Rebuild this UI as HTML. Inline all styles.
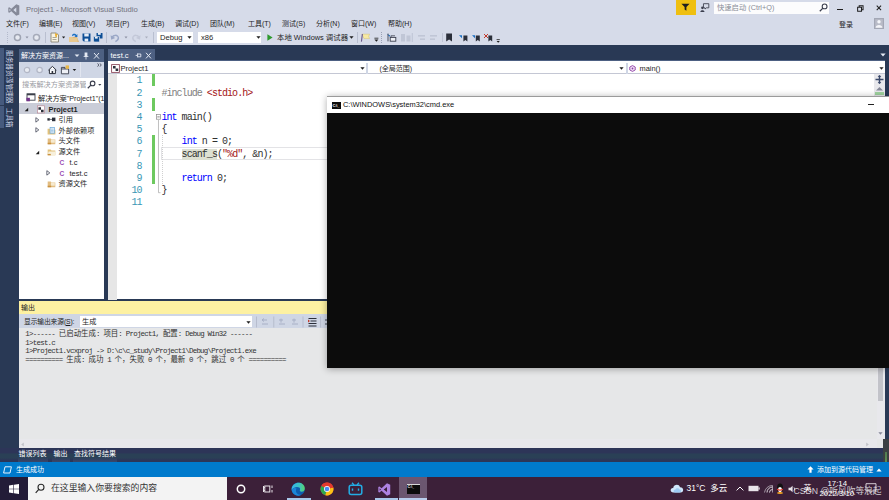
<!DOCTYPE html>
<html lang="zh-CN">
<head>
<meta charset="utf-8">
<title>Project1 - Microsoft Visual Studio</title>
<style>
html,body{margin:0;padding:0;}
body{width:889px;height:500px;overflow:hidden;position:relative;background:#d6dbe9;
  font-family:"Liberation Sans","Noto Sans CJK SC",sans-serif;font-size:7px;color:#1e1e1e;line-height:1;}
.a{position:absolute;white-space:nowrap;}
.t{position:absolute;white-space:nowrap;line-height:10px;height:10px;}
.mono{font-family:"Liberation Mono","Noto Sans CJK SC",monospace;}
svg{position:absolute;overflow:visible;}
/* ---------- title / menu / toolbar ---------- */
#title{left:26px;top:4.9px;font-size:7.7px;letter-spacing:-0.04px;color:#72727d;}
.menu{top:19.2px;font-size:7px;color:#1e1e1e;}
.combo{background:#fff;height:11px;top:32px;}
/* ---------- dark frame ---------- */
#frame{left:0;top:45px;width:889px;height:418px;background:#293955;}
.ptab{background:#4d6082;color:#fff;}
/* ---------- code ---------- */
.ln{position:absolute;left:118.5px;width:23px;text-align:right;color:#3a97b5;font-size:10px;letter-spacing:-0.95px;height:12px;line-height:12px;}
.cl{position:absolute;left:161.4px;font-size:10px;letter-spacing:-0.95px;height:12px;line-height:12px;white-space:pre;color:#303030;}
.hl{background:#dde0d2}.kw{color:#0000ff}.str{color:#a31515}.pp{color:#808080}
.gb{position:absolute;left:152.3px;width:2.8px;background:#6dc95f;margin-top:-0.3px}
/* ---------- output ---------- */
.ol .c{letter-spacing:0;font-size:7.44px}
.ol{position:absolute;left:25.3px;font-size:7.44px;letter-spacing:-0.744px;white-space:pre;color:#303030;height:9px;line-height:9px;}
</style>
</head>
<body>
<!-- title bar -->
<svg style="left:8px;top:4px" width="12" height="12" viewBox="0 0 12 12"><path d="M8.3 0.3 L11.3 1.6 V10.4 L8.3 11.7 L3.3 7.2 L1.3 8.8 L0.3 8.3 V3.7 L1.3 3.2 L3.3 4.8 Z M8.3 3.6 L5.3 6 L8.3 8.4 Z M1.5 4.8 V7.2 L2.8 6 Z" fill="#858998" fill-rule="evenodd"/></svg>
<div class="t" id="title">Project1 - Microsoft Visual Studio</div>


<!-- feedback / quick launch / window buttons -->
<div class="a" style="left:676px;top:0;width:20px;height:14.8px;background:#efbf10"></div>
<svg style="left:681.200px;top:3px" width="9" height="8.500" viewBox="0 0 11 10"><path d="M0.5 0.8 H10.5 L6.6 4.8 V9.2 L4.4 7.6 V4.8 Z" fill="#1e1e1e"/></svg>
<svg style="left:699.500px;top:2.800px" width="9.500" height="9.500" viewBox="0 0 11 11"><path d="M4 0.8 H10.2 V5.6 H7.4 L5.8 7 V5.6 H4 Z" fill="none" stroke="#3b3f4e" stroke-width="1"/><circle cx="2.8" cy="5.6" r="1.5" fill="#3b3f4e"/><path d="M0.4 10.4 C0.4 7.6 5.2 7.6 5.2 10.4 Z" fill="#3b3f4e"/></svg>
<div class="a" style="left:714px;top:2px;width:114.800px;height:11.800px;background:#fcfcfd"></div>
<div class="t" style="left:717px;top:3.4px;font-size:7.3px;color:#8a8d98">快速启动 (Ctrl+Q)</div>
<svg style="left:819px;top:3.4px" width="9" height="9" viewBox="0 0 9 9"><circle cx="5.6" cy="3.4" r="2.4" fill="none" stroke="#3b3f4e" stroke-width="1.1"/><path d="M3.9 5.1 L0.8 8.2" stroke="#3b3f4e" stroke-width="1.3"/></svg>
<div class="a" style="left:837.200px;top:8.600px;width:5.500px;height:1.700px;background:#1e1e1e"></div>
<svg style="left:856.500px;top:4.500px" width="7" height="7" viewBox="0 0 9 9"><path d="M0.8 3 H5.8 V8 H0.8 Z M2.8 3 V1 H7.8 V6 H5.8" fill="none" stroke="#1e1e1e" stroke-width="1.3"/></svg>
<svg style="left:876.400px;top:5.200px" width="5.800" height="5.800" viewBox="0 0 8 8"><path d="M1 1 L7 7 M7 1 L1 7" stroke="#1e1e1e" stroke-width="1.4"/></svg>
<div class="t" style="left:839px;top:19.7px;font-size:7px;color:#1e1e1e">登录</div>
<svg style="left:874px;top:18px" width="10" height="11" viewBox="0 0 10 11"><rect x="0.6" y="0.6" width="8.8" height="9.800" fill="#b9bcc8" stroke="#a3a7b5" stroke-width="1.200"/><circle cx="5" cy="3.700" r="1.700" fill="#f4f5f9"/><path d="M1.600 9.800 C1.600 6 8.400 6 8.400 9.800 Z" fill="#f4f5f9"/></svg>

<!-- menu -->
<div class="t menu" style="left:6px">文件(F)</div>
<div class="t menu" style="left:39px">编辑(E)</div>
<div class="t menu" style="left:72px">视图(V)</div>
<div class="t menu" style="left:106px">项目(P)</div>
<div class="t menu" style="left:141px">生成(B)</div>
<div class="t menu" style="left:175px">调试(D)</div>
<div class="t menu" style="left:210px">团队(M)</div>
<div class="t menu" style="left:248px">工具(T)</div>
<div class="t menu" style="left:282px">测试(S)</div>
<div class="t menu" style="left:316px">分析(N)</div>
<div class="t menu" style="left:351px">窗口(W)</div>
<div class="t menu" style="left:388px">帮助(H)</div>

<!-- toolbar -->
<div class="a" style="left:7px;top:32px;width:1px;height:11px;border-left:1px dotted #b3b9cb"></div>
<svg style="left:13px;top:33px" width="30" height="9" viewBox="0 0 30 9"><circle cx="4.5" cy="4.5" r="3" fill="#e6e9f1" stroke="#9ea3b2" stroke-width="1.5"/><path d="M12.5 3.6 h3 l-1.5 1.8z" fill="#8d92a3"/><circle cx="23.5" cy="4.5" r="3" fill="#e6e9f1" stroke="#a6abba" stroke-width="1.5"/></svg>
<div class="a" style="left:45px;top:32px;width:1px;height:11px;background:#b9bfd0"></div>
<svg style="left:50px;top:32px" width="60" height="11" viewBox="0 0 60 11"><path d="M1 1 H6.5 L8.5 3 V10 H1 Z" fill="#f7f3e3" stroke="#8a8676" stroke-width="0.9"/><path d="M5.2 0.4 l1 1.6 1.8 0.3 -1.3 1.3 0.3 1.8 -1.8-0.9z" fill="#e8a923"/><path d="M2.5 5.5 h4 M2.5 7.5 h4" stroke="#8a8676" stroke-width="0.7"/><path d="M12 4.6 h3.2 l-1.6 1.9z" fill="#1e1e1e"/><path d="M19 5 H27 L29 10 H19 Z" fill="#dcb67a"/><path d="M19 5 V10 H27.5 V6 H23.5 L22.5 5 Z" fill="#e9c98f"/><path d="M22 3.6 C22 1.4 25.6 1 26.4 3 L27.4 2 V5 H24.4 L25.5 3.9 C25 2.7 23 3 23 4.2" fill="#1b6fc2"/><path d="M32.5 1.5 H40.5 V9.5 H33.8 L32.5 8.2 Z" fill="#0e4f96"/><rect x="34.3" y="1.5" width="4.4" height="3" fill="#e8eef7"/><rect x="34.6" y="6.6" width="3.6" height="2.9" fill="#e8eef7"/><path d="M46.5 1 H52.5 V6.5 H47.4 L46.5 5.6 Z" fill="#0e4f96"/><path d="M43.5 4.5 H49.5 V10 H44.4 L43.5 9.1 Z" fill="#0e4f96" stroke="#d6dbe9" stroke-width="0.7"/><rect x="47.9" y="1" width="2.8" height="1.8" fill="#e8eef7"/><rect x="44.9" y="4.8" width="2.8" height="1.8" fill="#e8eef7"/></svg>
<div class="a" style="left:106px;top:32px;width:1px;height:11px;background:#b9bfd0"></div>
<svg style="left:110px;top:32px" width="42" height="11" viewBox="0 0 42 11"><path d="M2.2 6.6 C2.2 2.4 8.4 2.4 8.4 6 C8.4 8 6.6 9 5.4 9.6" fill="none" stroke="#9aa7c6" stroke-width="1.5"/><path d="M0.6 3.2 L1.2 7.8 L5.2 6z" fill="#9aa7c6"/><path d="M14.5 4.6 h3 l-1.5 1.8z" fill="#8d92a3"/><path d="M29 6.6 C29 2.4 22.8 2.4 22.8 6 C22.8 8 24.6 9 25.8 9.6" fill="none" stroke="#c3c8d8" stroke-width="1.5"/><path d="M30.6 3.2 L30 7.8 L26 6z" fill="#c3c8d8"/><path d="M35 4.6 h3 l-1.5 1.8z" fill="#a9aebd"/></svg>
<div class="a" style="left:153px;top:32px;width:1px;height:11px;background:#b9bfd0"></div>
<div class="a combo" style="left:157px;width:36px"></div>
<div class="t" style="left:160px;top:32.5px;font-size:7.6px;color:#1e1e1e">Debug</div>
<svg style="left:186.5px;top:36px" width="5" height="3" viewBox="0 0 5 3"><path d="M0.4 0.2 H4.6 L2.5 2.8z" fill="#1e1e1e"/></svg>
<div class="a combo" style="left:198px;width:63px"></div>
<div class="t" style="left:201px;top:32.5px;font-size:7.6px;color:#1e1e1e">x86</div>
<svg style="left:255.5px;top:36px" width="5" height="3" viewBox="0 0 5 3"><path d="M0.4 0.2 H4.6 L2.5 2.8z" fill="#1e1e1e"/></svg>
<svg style="left:267px;top:34px" width="6" height="7" viewBox="0 0 6 7"><path d="M0.4 0.2 L5.6 3.5 L0.4 6.8z" fill="#2f9a2f"/></svg>
<div class="t" style="left:277px;top:32.5px;font-size:7.4px;color:#1e1e1e">本地 Windows 调试器</div>
<svg style="left:349px;top:36px" width="5" height="3" viewBox="0 0 5 3"><path d="M0.4 0.2 H4.6 L2.5 2.8z" fill="#1e1e1e"/></svg>
<div class="a" style="left:357px;top:32px;width:1px;height:11px;background:#b9bfd0"></div>
<svg style="left:360px;top:32px" width="22" height="11" viewBox="0 0 22 11"><path d="M2 2.2 H9.6 L8.6 4.4 L9.6 6.6 H4 Z" fill="#f6e9a4" stroke="#d9c36a" stroke-width="0.5"/><path d="M2.4 2 L1.4 9.6" stroke="#6b5a8a" stroke-width="1.1"/><path d="M14.4 6.2 h4" stroke="#1e1e1e" stroke-width="0.8"/><path d="M14.4 7.6 h4 l-2 2.2z" fill="#1e1e1e"/></svg>
<div class="a" style="left:381px;top:32px;width:1px;height:11px;border-left:1px dotted #9aa1b5"></div>
<svg style="left:386px;top:32px" width="80" height="11" viewBox="0 0 80 11"><path d="M1 2 l2.4 2.8 1-1.4z" fill="#1b6fc2"/><path d="M2 1.6 V9.4" stroke="#3b3f4e" stroke-width="0.9"/><rect x="4.2" y="5.4" width="5.6" height="3.8" fill="#eef0f6" stroke="#3b3f4e" stroke-width="0.9"/><path d="M5 5.2 V3.8 H9" stroke="#3b3f4e" stroke-width="0.8" fill="none"/><g opacity="0.35"><rect x="15" y="2" width="4" height="7.5" fill="#9aa1b5"/><rect x="20.5" y="3.5" width="4" height="6" fill="#9aa1b5"/></g><path d="M26.3 1 v9" stroke="#b9bfd0" stroke-width="0.8"/><g opacity="0.35" fill="#9aa1b5"><rect x="32" y="3" width="7" height="1.6"/><rect x="34" y="6.4" width="5" height="1.6"/><rect x="44" y="3" width="7" height="1.6"/><rect x="44" y="6.4" width="5" height="1.6"/></g><path d="M56.5 1 v9" stroke="#b9bfd0" stroke-width="0.8"/></svg>
<svg style="left:445px;top:32px" width="60" height="14" viewBox="0 0 60 14"><path d="M1.2 1.4 H7 V9.6 L4.1 7.4 L1.2 9.6 Z" fill="#2b2f3a"/><g><path d="M14 3.2 l3 0 0 3z" fill="#1b6fc2"/><path d="M18.4 3.4 H22.4 V9.6 L20.4 8 L18.4 9.6 Z" fill="#2b2f3a"/></g><g><path d="M27 3.2 l3 0 0 3z" fill="#1b6fc2"/><path d="M30.8 3.4 H34.8 V9.6 L32.8 8 L30.8 9.6 Z" fill="#2b2f3a"/></g><g><path d="M39 2 l4 4 M43 2 l-4 4" stroke="#c0392b" stroke-width="1"/><path d="M43.4 3.6 H47.2 V9.6 L45.3 8 L43.4 9.6 Z" fill="#2b2f3a"/></g><path d="M51.6 7.6 h3.2" stroke="#1e1e1e" stroke-width="0.8"/><path d="M51.6 9 h3.2 l-1.6 1.8z" fill="#1e1e1e"/></svg>

<div id="frame" class="a"></div>

<!-- left auto-hide strip -->
<div class="a" style="left:0;top:47.5px;width:4.3px;height:57px;background:#465a7d"></div>
<div class="a" style="left:0;top:106px;width:4.3px;height:21.5px;background:#465a7d"></div>
<div class="a" style="left:13px;top:49.5px;height:8px;font-size:6.7px;line-height:8px;color:#d0d8ea;transform:rotate(90deg);transform-origin:0 0">服务器资源管理器</div>
<div class="a" style="left:13px;top:107.5px;height:8px;font-size:6.5px;line-height:8px;color:#d0d8ea;transform:rotate(90deg);transform-origin:0 0">工具箱</div>

<!-- solution explorer -->
<div class="a ptab" style="left:18.7px;top:49px;width:85.3px;height:13px"></div>
<div class="t" style="left:21px;top:50.5px;font-size:7px;color:#fff">解决方案资源...</div>
<svg style="left:74px;top:52px" width="28" height="8" viewBox="0 0 28 8"><path d="M0.6 2.4 H5.4 L3 5z" fill="#e4e9f3"/><path d="M10.6 0.6 h2.8 v3.6 h1 v0.9 h-2 v2.4 h-0.8 v-2.4 h-2 v-0.9 h1 z" fill="#e4e9f3"/><path d="M20 1 L25 6.6 M25 1 L20 6.6" stroke="#e4e9f3" stroke-width="1"/></svg>
<div class="a" style="left:18.7px;top:62px;width:85.3px;height:16px;background:#cfd6e5"></div>
<svg style="left:22px;top:64px" width="60" height="12" viewBox="0 0 60 12"><circle cx="5" cy="6" r="2.7" fill="#e9ecf3" stroke="#b2b7c6" stroke-width="1.2"/><circle cx="17.6" cy="6" r="2.7" fill="#e9ecf3" stroke="#b2b7c6" stroke-width="1.2"/><path d="M26.4 6.2 L30.4 2.4 L34.4 6.2 M27.4 5.6 V9.6 H33.4 V5.6" fill="#fff" stroke="#2b2f3a" stroke-width="1"/><rect x="29.6" y="7" width="1.6" height="2.6" fill="#2b2f3a"/><path d="M39.4 5 H46.6 V9.8 H39.4 Z" fill="#eef0f6" stroke="#3b3f4e" stroke-width="0.9"/><path d="M39.4 5 V3.4 H43 V5" fill="none" stroke="#3b3f4e" stroke-width="0.9"/><path d="M43.6 1.4 h3.4 v3.4 h-3.4z" fill="#e8b84a"/><path d="M50.6 5 h3.6 l-1.8 2z" fill="#1e1e1e"/></svg>
<div class="a" style="left:80px;top:62px;width:1px;height:15px;background:#e1e5ef"></div>
<svg style="left:97px;top:63px" width="5" height="4" viewBox="0 0 5 4"><path d="M0.6 0.4 L1.8 2 L0.6 3.6 M3 0.400 L4.200 2 L3 3.600" fill="none" stroke="#3b3f4e" stroke-width="0.800"/></svg>
<div class="a" style="left:18.7px;top:78px;width:85.3px;height:12.5px;background:#fff"></div>
<div class="t" style="left:22px;top:79.5px;font-size:7.2px;color:#9a9ca3;width:64px;overflow:hidden">搜索解决方案资源管理器</div>
<svg style="left:87px;top:80px" width="16" height="9" viewBox="0 0 16 9"><circle cx="5.6" cy="3.4" r="2.3" fill="none" stroke="#3b3f4e" stroke-width="1.1"/><path d="M3.9 5.1 L0.8 8.2" stroke="#3b3f4e" stroke-width="1.3"/><path d="M11.2 4 h3.2 l-1.6 1.8z" fill="#3b3f4e"/></svg>
<div class="a" style="left:18.7px;top:91px;width:85.3px;height:208.4px;background:#fff"></div>
<div class="a" style="left:18.7px;top:103px;width:85.3px;height:10.7px;background:#cacdd8"></div>
<!-- tree rows -->
<svg style="left:26px;top:93.2px" width="10" height="9" viewBox="0 0 10 9"><rect x="1" y="0.8" width="8" height="6.4" fill="#fff" stroke="#3b3f4a" stroke-width="0.9"/><rect x="1" y="0.8" width="8" height="1.5" fill="#3b3f4a"/><rect x="0.4" y="4.8" width="3.5" height="3.5" fill="#74358a"/></svg>
<div class="t" style="left:38px;top:94px;font-size:7.2px">解决方案"Project1"(1</div>
<svg style="left:24.300px;top:106.500px" width="5" height="5" viewBox="0 0 6 6"><path d="M5 0.8 V5 H0.8z" fill="#1e1e1e"/></svg>
<svg style="left:36px;top:104.5px" width="10" height="9" viewBox="0 0 10 9"><rect x="1.4" y="0.8" width="7.2" height="7.2" fill="#fff" stroke="#b98a98" stroke-width="0.7"/><path d="M2.4 2.2 h2.6 v2.6 h-2.6z M5 4.8 h2.6 v2.4 h-2.6z" fill="#2b2f3a"/></svg>
<div class="t" style="left:48.5px;top:104.5px;font-size:7.4px;font-weight:bold">Project1</div>
<svg style="left:35.300px;top:116.800px" width="5" height="5.800" viewBox="0 0 6 7"><path d="M1 0.8 L4.6 3.5 L1 6.2z" fill="none" stroke="#4b4f5e" stroke-width="1"/></svg>
<svg style="left:47px;top:117px" width="9" height="5" viewBox="0 0 9 5"><rect x="0.4" y="1.2" width="2.4" height="2.4" fill="#2b2f3a"/><path d="M2.8 2.4 h2.4" stroke="#2b2f3a" stroke-width="0.7"/><rect x="5" y="0.6" width="3.4" height="3.6" fill="#2b2f3a"/></svg>
<div class="t" style="left:58.5px;top:115.3px;font-size:7.2px">引用</div>
<svg style="left:35.300px;top:127.400px" width="5" height="5.800" viewBox="0 0 6 7"><path d="M1 0.8 L4.6 3.5 L1 6.2z" fill="none" stroke="#4b4f5e" stroke-width="1"/></svg>
<svg style="left:47.300px;top:126.600px" width="9" height="8" viewBox="0 0 10 9"><path d="M0.6 2 H4 L5 3 H9.4 V8.4 H0.6 Z" fill="#e3c27c"/><rect x="3.4" y="0.6" width="5" height="6.4" fill="#eaf3fb" stroke="#6aa7d8" stroke-width="0.8"/><path d="M4.4 2.4 h3 M4.4 4 h3 M4.4 5.4 h3" stroke="#6aa7d8" stroke-width="0.6"/></svg>
<div class="t" style="left:58.5px;top:125.5px;font-size:7.2px">外部依赖项</div>
<svg style="left:47.300px;top:137.300px" width="9" height="7.800" viewBox="0 0 10 9"><path d="M0.6 1.6 H4 L5 2.8 H9.4 V8.4 H0.6 Z" fill="#e2bd82"/><rect x="4.4" y="3" width="4.4" height="3.6" fill="#f6ead0"/><path d="M0.6 6.6 h4 v1.8 h-4z" fill="#c9913f"/></svg>
<div class="t" style="left:58.5px;top:135.8px;font-size:7.2px">头文件</div>
<svg style="left:35.300px;top:149.800px" width="5" height="5" viewBox="0 0 6 6"><path d="M5 0.8 V5 H0.8z" fill="#1e1e1e"/></svg>
<svg style="left:47.300px;top:148.300px" width="9" height="7.800" viewBox="0 0 10 9"><path d="M0.6 1.6 H4 L5 2.8 H9.4 V8.4 H0.6 Z" fill="#e3c27c"/><path d="M1.6 4 H9.4 V8.4 H0.6 Z" fill="#f7f0dc"/><rect x="0.6" y="6.8" width="3.6" height="1.6" fill="#c9913f"/></svg>
<div class="t" style="left:58.5px;top:147px;font-size:7.2px">源文件</div>
<div class="t" style="left:59.5px;top:157.7px;font-size:6.6px;color:#9b4fb5;font-weight:bold">C</div>
<div class="t" style="left:69.5px;top:157.7px;font-size:7.5px">t.c</div>
<svg style="left:45.500px;top:170.400px" width="5" height="5.800" viewBox="0 0 6 7"><path d="M1 0.8 L4.6 3.5 L1 6.2z" fill="none" stroke="#4b4f5e" stroke-width="1"/></svg>
<div class="t" style="left:59.5px;top:168.7px;font-size:6.6px;color:#9b4fb5;font-weight:bold">C</div>
<div class="t" style="left:69.5px;top:168.7px;font-size:7.5px">test.c</div>
<svg style="left:47.300px;top:180.300px" width="9" height="7.800" viewBox="0 0 10 9"><path d="M0.6 1.6 H4 L5 2.8 H9.4 V8.4 H0.6 Z" fill="#e2bd82"/><rect x="4.4" y="3" width="4.4" height="3.6" fill="#f6ead0"/><path d="M0.6 6.6 h4 v1.8 h-4z" fill="#c9913f"/></svg>
<div class="t" style="left:58.5px;top:179px;font-size:7.2px">资源文件</div>

<!-- editor -->
<div class="a ptab" style="left:108px;top:49px;width:47px;height:13px"></div>
<div class="a" style="left:108px;top:60.3px;width:777.3px;height:1.2px;background:#4d6082"></div>
<div class="t" style="left:110.5px;top:50.5px;font-size:7.6px;color:#fff">test.c</div>
<svg style="left:135px;top:52px" width="20" height="8" viewBox="0 0 20 8"><path d="M0.6 3.4 h2 M2.6 1.4 v4 M2.6 2 h3.2 v2.8 h-3.2" fill="none" stroke="#e4e9f3" stroke-width="0.9"/><path d="M11 0.8 L16 6.4 M16 0.8 L11 6.4" stroke="#e4e9f3" stroke-width="1"/></svg>
<svg style="left:880px;top:53px" width="6" height="4" viewBox="0 0 6 4"><path d="M0.4 0.4 H5.6 L3 3.6z" fill="#e4e9f3"/></svg>
<div class="a" style="left:108px;top:61.2px;width:777.3px;height:238.3px;background:#fff"></div>
<div class="a" style="left:108px;top:73px;width:777.3px;height:1px;background:#c4c7d4"></div>
<!-- nav bar -->
<svg style="left:110.5px;top:64px" width="9" height="9" viewBox="0 0 9 9"><rect x="0.6" y="0.6" width="7.8" height="7.8" fill="#fff" stroke="#8c4a5c" stroke-width="0.9"/><path d="M2 2 h2.6 v2.6 h-2.600z M4.600 4.600 h2.600 v2.400 h-2.600z" fill="#2b2f3a"/></svg>
<div class="t" style="left:120.5px;top:63.5px;font-size:7.6px">Project1</div>
<svg style="left:359.5px;top:67px" width="5" height="3" viewBox="0 0 5 3"><path d="M0.400 0.200 H4.600 L2.500 2.800z" fill="#1e1e1e"/></svg>
<div class="a" style="left:366px;top:63px;width:2px;height:10.5px;background:#cfd6e5"></div>
<div class="t" style="left:379.5px;top:63.5px;font-size:7px">(全局范围)</div>
<svg style="left:618.5px;top:67px" width="5" height="3" viewBox="0 0 5 3"><path d="M0.400 0.200 H4.600 L2.500 2.800z" fill="#1e1e1e"/></svg>
<div class="a" style="left:625.5px;top:63px;width:2px;height:10.500px;background:#cfd6e5"></div>
<svg style="left:629px;top:65px" width="7" height="7" viewBox="0 0 7 7"><path d="M3.500 0.600 L6.200 2 V5 L3.500 6.400 L0.800 5 V2 Z" fill="#f3e6f8" stroke="#8e3da6" stroke-width="0.9"/><circle cx="3.500" cy="3.500" r="0.900" fill="#8e3da6"/></svg>
<div class="t" style="left:639.500px;top:63.500px;font-size:7.4px">main()</div>
<svg style="left:878.500px;top:66.5px" width="5" height="3" viewBox="0 0 5 3"><path d="M0.400 0.200 H4.600 L2.500 2.800z" fill="#1e1e1e"/></svg>
<!-- margins -->
<div class="a" style="left:108px;top:74px;width:9.200px;height:225.500px;background:#e6e6e6"></div>
<!-- vertical scrollbar top -->
<div class="a" style="left:873.7px;top:74px;width:11.6px;height:22px;background:#e8e8ec"></div>
<svg style="left:875.300px;top:75px" width="9" height="20" viewBox="0 0 9 20"><path d="M4.500 0.500 V8.500 M0.500 4.500 H8.500" stroke="#3b4a6b" stroke-width="1.500"/><path d="M4.500 0 l1.800 2 h-3.600z M4.500 9 l1.800-2 h-3.600z" fill="#3b4a6b"/><path d="M1 15.500 H8 L4.500 12z" fill="#868999"/><rect x="0" y="17" width="9" height="3" fill="#9fd39f"/></svg>
<div class="a" style="left:161px;top:147.5px;width:728px;height:11.2px;border:1px solid #e3e3e6;box-sizing:content-box;margin-top:-0.5px"></div>
<div class="ln mono" style="top:75.4px">1</div>
<div class="ln mono" style="top:87.6px">2</div><div class="cl mono" style="top:87.6px"><span class="pp">#include </span><span class="str">&lt;stdio.h&gt;</span></div>
<div class="ln mono" style="top:99.8px">3</div>
<div class="ln mono" style="top:112.0px">4</div><div class="cl mono" style="top:112.0px"><span class="kw">int</span> main()</div>
<div class="ln mono" style="top:124.2px">5</div><div class="cl mono" style="top:124.2px">{</div>
<div class="ln mono" style="top:136.4px">6</div><div class="cl mono" style="top:136.4px">    <span class="kw">int</span> n = 0;</div>
<div class="ln mono" style="top:148.6px">7</div><div class="cl mono" style="top:148.6px">    <span class="hl">scanf_s</span>(<span class="str">"%d"</span>, &amp;n);</div>
<div class="ln mono" style="top:160.8px">8</div>
<div class="ln mono" style="top:173.0px">9</div><div class="cl mono" style="top:173.0px">    <span class="kw">return</span> 0;</div>
<div class="ln mono" style="top:185.2px">10</div><div class="cl mono" style="top:185.2px">}</div>
<div class="ln mono" style="top:197.4px">11</div>
<div class="gb" style="top:74.3px;height:12.2px"></div>
<div class="gb" style="top:98.7px;height:12.2px"></div>
<div class="gb" style="top:135.3px;height:48.8px"></div>
<svg style="left:155px;top:110.9px" width="6" height="85.4" viewBox="0 0 6 85.4"><path d="M3.5 9 V81.7 H5.5" fill="none" stroke="#a5a5a5" stroke-width="0.7"/><rect x="1.4" y="3.6" width="4.2" height="4.6" fill="#fff" stroke="#8a8a8a" stroke-width="0.7"/><path d="M2.3 5.9 h2.4" stroke="#555" stroke-width="0.7"/></svg>
<div class="a" style="left:161.500px;top:135.3px;width:0;height:48.8px;border-left:1px dotted #d0d0d0"></div>

<!-- cmd window --><div class="a" style="left:0;top:0;z-index:5">
<div class="a" style="left:327px;top:96px;width:562px;height:271.500px;background:#0c0c0c;box-shadow:0 1px 7px rgba(0,0,0,0.33)"></div>
<div class="a" style="left:327px;top:96px;width:562px;height:17px;background:#fff;border-top:1px solid #9b9b9b;box-sizing:border-box"></div>
<div class="a" style="left:331.500px;top:101.500px;width:9.500px;height:7px;background:#0c0c0c"></div>
<div class="t" style="left:332.500px;top:102.500px;font-size:4px;line-height:5px;height:5px;color:#fff;font-weight:bold;letter-spacing:-0.2px">C:\_</div>
<div class="t" style="left:343px;top:100px;font-size:7.45px;color:#111">C:\WINDOWS\system32\cmd.exe</div>
<div class="a" style="left:868px;top:104px;width:6px;height:1px;background:#222"></div>
</div>


<!-- output panel -->
<div class="a" style="left:18.6px;top:301.300px;width:866.7px;height:13.200px;background:#fdf1a2"></div>
<div class="t" style="left:21px;top:303.4px;font-size:7px;color:#1e1e1e">输出</div>
<div class="a" style="left:18.6px;top:314.400px;width:866.7px;height:13.600px;background:#cfd6e5"></div>
<div class="t" style="left:24px;top:317px;font-size:6.8px;letter-spacing:-0.15px;color:#1e1e1e">显示输出来源(<u>S</u>):</div>
<div class="a" style="left:79.500px;top:316.200px;width:172.500px;height:10.500px;background:#fff"></div>
<div class="t" style="left:82px;top:317px;font-size:7.2px;color:#1e1e1e">生成</div>
<svg style="left:246px;top:320.500px" width="5" height="3" viewBox="0 0 5 3"><path d="M0.400 0.200 H4.600 L2.500 2.800z" fill="#1e1e1e"/></svg>
<svg style="left:255px;top:316px" width="80" height="12" viewBox="0 0 80 12"><path d="M1.500 0.500 v11 M18.800 0.500 v11 M48 0.500 v11 M65.600 0.500 v11" stroke="#b4bacb" stroke-width="0.9"/><g fill="none" stroke="#a8b0c6" stroke-width="1"><path d="M7 4 h5 M7 8 h6 M9 2.500 L7 4 L9 5.500"/><path d="M24 4 h4 M24 8 h6 M26 2.600 v4"/><path d="M37 4 h4 M37 8 h6 M39 2.600 v4"/></g><g stroke="#2b2f3a" stroke-width="1.100" fill="none"><path d="M53.500 2.500 h8 M55.500 5 h6 M53.500 7.500 h8 M53.500 10 h8"/><path d="M53 3.600 l2 1.400 -2 1.400z" fill="#c0392b" stroke="none"/></g><path d="M70 4 h6 M70 8 h6" stroke="#3b3f4e" stroke-width="1.200"/></svg>
<div class="a" style="left:18.6px;top:328px;width:866.7px;height:119.6px;background:#e6e7e8"></div>
<div class="ol mono" style="top:330.000px">1&gt;------ <span class="c">已启动生成</span>: <span class="c">项目</span>: Project1, <span class="c">配置</span>: Debug Win32 ------</div>
<div class="ol mono" style="top:338.650px">1&gt;test.c</div>
<div class="ol mono" style="top:347.300px">1&gt;Project1.vcxproj -&gt; D:\c\c_study\Project1\Debug\Project1.exe</div>
<div class="ol mono" style="top:355.950px">========== <span class="c">生成</span>: <span class="c">成功</span> 1 <span class="c">个，失败</span> 0 <span class="c">个，最新</span> 0 <span class="c">个，跳过</span> 0 <span class="c">个</span> ==========</div>
<!-- output scrollbars -->
<div class="a" style="left:876.8px;top:328px;width:8.5px;height:111px;background:#e8e8ec"></div>
<div class="a" style="left:878px;top:336px;width:4.7px;height:64.7px;background:#c2c3c9"></div>
<svg style="left:878.200px;top:432px" width="5" height="3" viewBox="0 0 5 3"><path d="M0.400 0.200 H4.600 L2.500 2.800z" fill="#868999"/></svg>
<div class="a" style="left:18.6px;top:439px;width:858.2px;height:8.6px;background:#e8e8ec"></div>
<svg style="left:21px;top:441.500px" width="3" height="5" viewBox="0 0 3 5"><path d="M2.800 0.400 V4.600 L0.200 2.500z" fill="#c2c3c9"/></svg>
<svg style="left:866px;top:441.500px" width="3" height="5" viewBox="0 0 3 5"><path d="M0.200 0.400 V4.600 L2.800 2.500z" fill="#c2c3c9"/></svg>
<!-- bottom tabs -->
<div class="a" style="left:0;top:447.600px;width:889px;height:15px;background:linear-gradient(#2d3558 0,#2d3558 30%,#2a4056 42%,#2a4056 66%,#2c3657 78%,#2c3657 100%)"></div>
<div class="a" style="left:18px;top:457px;width:30px;height:5.5px;background:linear-gradient(rgba(70,90,125,0),rgba(70,90,125,0.6))"></div>
<div class="a" style="left:52px;top:457px;width:18px;height:5.5px;background:linear-gradient(rgba(70,90,125,0),rgba(70,90,125,0.6))"></div>
<div class="a" style="left:73px;top:457px;width:44px;height:5.5px;background:linear-gradient(rgba(70,90,125,0),rgba(70,90,125,0.6))"></div>
<div class="t" style="left:18.500px;top:448.500px;font-size:7px;color:#fff">错误列表</div>
<div class="t" style="left:53.500px;top:448.500px;font-size:7px;color:#fff">输出</div>
<div class="t" style="left:74px;top:448.500px;font-size:7px;color:#fff">查找符号结果</div>
<!-- small widget on right edge -->
<div class="a" style="left:883.3px;top:438.5px;width:5.7px;height:34px;background:#3b4043"></div>
<div class="a" style="left:885px;top:452px;width:2px;height:16px;background:linear-gradient(#4f7a52,#6a9a4c)"></div>

<!-- status bar -->
<div class="a" style="left:0;top:462.400px;width:889px;height:14.600px;background:#007acc"></div>
<svg style="left:3px;top:465.500px" width="9" height="8" viewBox="0 0 9 8"><path d="M2 0.800 H8.400 L7 7 H0.600 Z" fill="none" stroke="#e8f3fc" stroke-width="1"/></svg>
<div class="t" style="left:16px;top:464.500px;font-size:7px;color:#fff">生成成功</div>
<svg style="left:807px;top:466px" width="7" height="7" viewBox="0 0 7 7"><path d="M3.500 0.300 L6.600 3.600 H4.600 V6.700 H2.400 V3.600 H0.400 Z" fill="#fff"/></svg>
<div class="t" style="left:817px;top:464.500px;font-size:7px;color:#fff">添加到源代码管理</div>
<svg style="left:876px;top:468px" width="6" height="4" viewBox="0 0 6 4"><path d="M0.400 3.600 H5.600 L3 0.400z" fill="#fff"/></svg>

<!-- taskbar -->
<div class="a" style="left:0;top:477px;width:889px;height:23px;background:#3c2039"></div>
<div class="a" style="left:0;top:477px;width:27.500px;height:23px;background:#231c38"></div>
<svg style="left:9px;top:483.500px" width="10" height="10" viewBox="0 0 10 10"><path d="M0 1.400 L4.400 0.800 V4.700 H0 Z M5 0.700 L10 0 V4.700 H5 Z M0 5.300 H4.400 V9.200 L0 8.600 Z M5 5.300 H10 V10 L5 9.300 Z" fill="#fff"/></svg>
<div class="a" style="left:27.500px;top:477px;width:199px;height:23px;background:#f3f3f3"></div>
<svg style="left:34.500px;top:483px" width="10" height="11" viewBox="0 0 10 11"><circle cx="6" cy="4.200" r="3" fill="none" stroke="#2b2b2b" stroke-width="1.100"/><path d="M3.800 6.400 L0.700 9.900" stroke="#2b2b2b" stroke-width="1.200"/></svg>
<div class="t" style="left:51px;top:482.3px;font-size:8.85px;line-height:13px;height:13px;color:#333">在这里输入你要搜索的内容</div>
<svg style="left:235.500px;top:483.500px" width="10" height="10" viewBox="0 0 10 10"><circle cx="5" cy="5" r="3.700" fill="none" stroke="#fff" stroke-width="1.500"/></svg>
<svg style="left:263px;top:483.500px" width="11" height="10" viewBox="0 0 11 10"><rect x="1.800" y="2" width="5" height="6" fill="none" stroke="#e9e4ea" stroke-width="1"/><path d="M0.500 2 v6 M9 1.500 v2.500 M9 6 v2.500" stroke="#e9e4ea" stroke-width="1"/><path d="M0 3.500 h2 M0 6.500 h2" stroke="#e9e4ea" stroke-width="0.800"/></svg>
<!-- edge -->
<svg style="left:290.500px;top:481.500px" width="14.400" height="14.400" viewBox="0 0 14 14"><defs><linearGradient id="eg" x1="0" y1="0" x2="1" y2="0"><stop offset="0" stop-color="#35b4ea"/><stop offset="0.6" stop-color="#3cc4c0"/><stop offset="1" stop-color="#5bd267"/></linearGradient></defs><circle cx="7" cy="7" r="6.400" fill="#0e5cae"/><path d="M0.600 7.600 C0.400 2.600 5 0.200 8.400 0.700 C11.600 1.200 13.600 3.800 13.400 6.600 C13.300 8.400 12 9.400 10.400 9.400 C9 9.400 8.400 8.800 8.600 8 C8.900 7 9 6.200 8 5.400 C6 4 2.600 5 0.600 7.600 Z" fill="url(#eg)"/><path d="M4.800 8.600 C4.800 11 7 13 10 12.400 C8 14 4 13.600 2 11 C0.800 9.400 0.600 8 0.600 7.600 C2 5.600 5 5.600 5.400 6.400 C5 7 4.800 7.800 4.800 8.600Z" fill="#1b86d8"/></svg>
<div class="a" style="left:287px;top:498px;width:23.500px;height:2px;background:#a9c9ea"></div>
<!-- chrome -->
<svg style="left:319.800px;top:481.800px" width="14" height="14" viewBox="0 0 14 14"><circle cx="7" cy="7" r="6.500" fill="#e33b2e"/><path d="M7 7 L1.400 3.700 A6.500 6.500 0 0 0 5.400 13.300 Z" fill="#2da94f"/><path d="M7 7 L5.400 13.300 A6.500 6.500 0 0 0 13.300 5.400 Z" fill="#fbc116"/><path d="M7 7 L13.300 5.400 A6.500 6.500 0 0 0 1.400 3.700 Z" fill="#e33b2e"/><circle cx="7" cy="7" r="3" fill="#fff"/><circle cx="7" cy="7" r="2.300" fill="#4a8af4"/></svg>
<!-- bilibili -->
<svg style="left:348px;top:482px" width="15" height="14" viewBox="0 0 15 14"><path d="M4 0.800 L6 3 M11 0.800 L9 3" stroke="#23ade5" stroke-width="1.300" fill="none"/><rect x="1.200" y="3.200" width="12.600" height="9.200" rx="2" fill="none" stroke="#23ade5" stroke-width="1.500"/><path d="M4.500 6.400 v2.400 M10.500 6.400 v2.400" stroke="#23ade5" stroke-width="1.400"/></svg>
<!-- vs -->
<svg style="left:378px;top:482.500px" width="13" height="13" viewBox="0 0 12 12"><path d="M8.300 0.300 L11.300 1.600 V10.400 L8.300 11.700 L3.300 7.200 L1.300 8.800 L0.300 8.300 V3.700 L1.300 3.200 L3.300 4.800 Z M8.300 3.600 L5.300 6 L8.300 8.400 Z M1.500 4.800 V7.200 L2.800 6 Z" fill="#ad82e0" fill-rule="evenodd"/></svg>
<div class="a" style="left:374.500px;top:498px;width:23px;height:2px;background:#a9c9ea"></div>
<!-- cmd -->
<div class="a" style="left:399px;top:477px;width:28px;height:23px;background:#6b5670"></div>
<div class="a" style="left:399px;top:498px;width:28px;height:2px;background:#b9cdec"></div>
<div class="a" style="left:406.500px;top:483.500px;width:13px;height:10px;background:#0c0c0c;border-top:1.500px solid #d8d8d8;box-sizing:border-box"></div>
<div class="t" style="left:407.500px;top:485px;font-size:3.500px;line-height:4px;height:4px;color:#fff;font-weight:bold">C:\_</div>
<!-- tray -->
<svg style="left:670px;top:483px" width="14" height="10" viewBox="0 0 14 10"><path d="M3.400 9.400 C-0.400 9.400 0 4.600 3.200 5 C3.600 1 9.400 0.600 10 4.200 C14 4 14.200 9.400 10.600 9.400 Z" fill="#cfe6fb"/><path d="M5 9.400 C3 9.400 3.200 6.600 5.200 6.800 C5.600 4.800 9 4.600 9.400 6.600 C11.600 6.600 11.600 9.400 9.600 9.400 Z" fill="#9ccaf3"/></svg>
<div class="t" style="left:686.5px;top:483px;font-size:8.5px;line-height:11px;height:11px;color:#fff">31°C &nbsp;多云</div>
<svg style="left:735.500px;top:486px" width="8" height="5" viewBox="0 0 8 5"><path d="M0.600 4.400 L4 1 L7.400 4.400" fill="none" stroke="#fff" stroke-width="1"/></svg>
<svg style="left:748px;top:485px" width="12" height="7" viewBox="0 0 12 7"><rect x="0.500" y="0.800" width="10" height="5.400" fill="#e9e4ea"/><rect x="10.500" y="2.400" width="1.200" height="2.200" fill="#e9e4ea"/></svg>
<svg style="left:764px;top:484.500px" width="9" height="8" viewBox="0 0 9 8"><path d="M8.500 7.500 L8.500 0.500 A8 8 0 0 0 0.500 7.500" fill="none" stroke="#b9b0bb" stroke-width="0.800"/><path d="M8.500 7.500 m-5.500 0 A5.500 5.500 0 0 1 8.500 2 M8.500 7.500 m-3 0 A3 3 0 0 1 8.500 4.500" fill="none" stroke="#e9e4ea" stroke-width="0.900"/></svg>
<svg style="left:776px;top:483px" width="8" height="11" viewBox="0 0 8 11"><ellipse cx="4" cy="5" rx="3" ry="4.400" fill="#111"/><ellipse cx="4" cy="6.600" rx="2" ry="2.600" fill="#fff"/><path d="M1 5.600 Q4 7.400 7 5.600 L7 7 Q4 8.400 1 7 Z" fill="#e0352b"/><ellipse cx="4" cy="10" rx="3" ry="0.900" fill="#f2a122"/></svg>
<svg style="left:788px;top:484.500px" width="9" height="8" viewBox="0 0 9 8"><path d="M0.500 2.800 H2.400 L4.600 0.800 V7.200 L2.400 5.200 H0.500 Z" fill="#e9e4ea"/><path d="M6 2.400 Q7.400 4 6 5.600" fill="none" stroke="#e9e4ea" stroke-width="0.800"/></svg>
<div class="t" style="left:803.500px;top:483px;font-size:8px;line-height:11px;height:11px;color:#fff">英</div>
<div class="t" style="left:827.5px;top:478.500px;font-size:7.800px;line-height:9px;height:9px;color:#fff">17:14</div>
<div class="t" style="left:819.5px;top:489.300px;font-size:7.800px;line-height:9px;height:9px;color:#fff">2022/3/10</div>
<svg style="left:864.5px;top:483px" width="12" height="10.500" viewBox="0 0 13 12"><path d="M0.800 0.800 H12.200 V9 H8 L6.500 10.800 L5 9 H0.800 Z" fill="none" stroke="#e9e4ea" stroke-width="1"/></svg>
<div class="t" style="left:793.5px;top:484.500px;font-size:8.700px;line-height:12px;height:12px;color:rgba(255,255,255,0.78);z-index:6">CSDN @听风吹等浪起</div>



</body>
</html>
